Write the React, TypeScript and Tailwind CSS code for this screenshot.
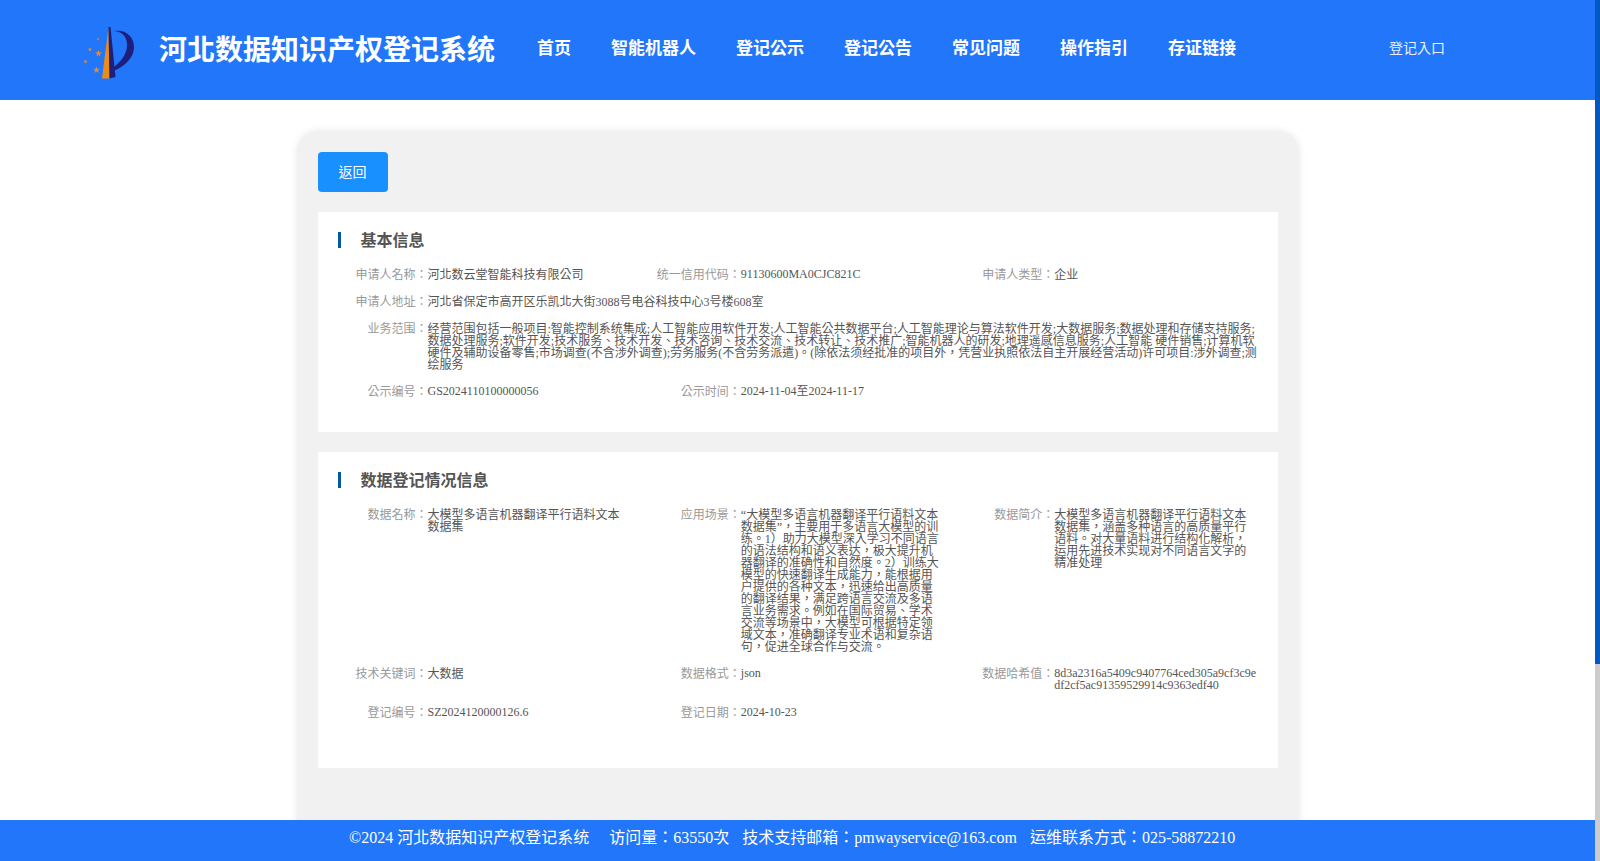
function Star({ cx, cy, r }: { cx: number; cy: number; r: number }) {
  const points = Array.from({ length: 10 }, (_, i) => {
    const radius = i % 2 === 0 ? r : r * 0.42;
    const angle = (Math.PI / 5) * i - Math.PI / 2;
    return `${(cx + radius * Math.cos(angle)).toFixed(2)},${(cy + radius * Math.sin(angle)).toFixed(2)}`;
  }).join(' ');
  return <polygon points={points} fill="#e58a2c" />;
}

function Logo() {
  return (
    <svg width="80" height="70" viewBox="0 0 80 70" className="shrink-0">
      <polygon points="38.5,12 32,63.5 39.5,63.5" fill="#ee8a1a" />
      <polygon points="38.5,12 40.5,12 45.5,62 39.5,63.5" fill="#1d1f7a" />
      <path d="M44.5 16 C56 14 64.5 22 64 33 C63.5 44 53 52 44.5 55.5 L44 52 C50 47 57 40 57 30 C57 21 52 17 44.5 16 Z" fill="#1d1f7a" />
      <Star cx={28.5} cy={38.5} r={3.6} />
      <Star cx={26.5} cy={55} r={3.6} />
      <Star cx={20} cy={34.5} r={2.2} />
      <Star cx={15.5} cy={46.5} r={2.2} />
      <Star cx={28} cy={24} r={1.5} />
    </svg>
  );
}

const navItems = ['首页', '智能机器人', '登记公示', '登记公告', '常见问题', '操作指引', '存证链接'];

function Field({ label, value, full, latin }: { label: string; value: string; full?: boolean; latin?: boolean }) {
  return (
    <div className={`flex mb-[15px] text-[12px] leading-[12px] ${full ? 'col-span-3' : ''}`}>
      <div className="w-[100px] shrink-0 pt-px -mb-px text-right text-[#999]">{label}：</div>
      <div className={`text-[#555] break-all ${latin ? '' : 'pt-px -mb-px'} ${full ? 'w-[830px]' : 'w-[203px]'}`}>{value}</div>
    </div>
  );
}

function Section({ title, className, children }: { title: string; className?: string; children: React.ReactNode }) {
  return (
    <section className={`bg-white px-[10px] pt-[20px] ${className ?? ''}`}>
      <div className="flex items-center gap-[20px] pl-[10px] mb-[20px]">
        <span className="w-[3px] h-[16px] bg-[#005a9e]" />
        <h2 className="pt-px -mb-px text-[16px] leading-[16px] font-bold text-[#555]">{title}</h2>
      </div>
      <div className="grid grid-cols-3">{children}</div>
    </section>
  );
}

export default function App() {
  return (
    <div
      className="h-screen flex overflow-hidden bg-white"
      style={{ fontFamily: '"Liberation Serif", "Noto Sans CJK TC", serif' }}
    >
      <div className="flex-1 min-w-0 flex flex-col">
        <header className="h-[100px] shrink-0 bg-[#2176fa] flex items-center pl-[70px] text-white">
          <Logo />
          <div className="ml-[9px] pt-[2px] text-[28px] font-bold whitespace-nowrap">河北数据知识产权登记系统</div>
          <nav className="flex gap-[40px] ml-[42px] pb-[2px]">
            {navItems.map((item) => (
              <a key={item} className="text-[17px] font-bold whitespace-nowrap">
                {item}
              </a>
            ))}
          </nav>
          <a className="ml-[153px] pb-[3px] text-[14px] text-white/90">登记入口</a>
        </header>

        <main className="flex-1 min-h-0 overflow-hidden pt-[32px]">
          <div className="w-[1000px] h-[910px] mx-auto bg-[#f1f1f1] rounded-[20px] shadow-[0_0_8px_rgba(0,0,0,0.12)] p-[20px]">
            <button type="button" className="block w-[70px] h-[40px] rounded-[4px] bg-[#1890ff] text-white text-[14px]">
              返回
            </button>

            <Section title="基本信息" className="mt-[20px] pb-[20px]">
              <Field label="申请人名称" value="河北数云堂智能科技有限公司" />
              <Field latin label="统一信用代码" value="91130600MA0CJC821C" />
              <Field label="申请人类型" value="企业" />
              <Field full label="申请人地址" value="河北省保定市高开区乐凯北大街3088号电谷科技中心3号楼608室" />
              <Field
                full
                label="业务范围"
                value="经营范围包括一般项目:智能控制系统集成;人工智能应用软件开发;人工智能公共数据平台;人工智能理论与算法软件开发;大数据服务;数据处理和存储支持服务;数据处理服务;软件开发;技术服务、技术开发、技术咨询、技术交流、技术转让、技术推广;智能机器人的研发;地理遥感信息服务;人工智能 硬件销售;计算机软硬件及辅助设备零售;市场调查(不含涉外调查);劳务服务(不含劳务派遣)。(除依法须经批准的项目外，凭营业执照依法自主开展经营活动)许可项目:涉外调查;测绘服务"
              />
              <Field latin label="公示编号" value="GS2024110100000056" />
              <Field latin label="公示时间" value="2024-11-04至2024-11-17" />
            </Section>

            <Section title="数据登记情况信息" className="mt-[20px] pb-[35px]">
              <Field label="数据名称" value="大模型多语言机器翻译平行语料文本数据集" />
              <Field
                label="应用场景"
                value="“大模型多语言机器翻译平行语料文本数据集”，主要用于多语言大模型的训练。1）助力大模型深入学习不同语言的语法结构和语义表达，极大提升机器翻译的准确性和自然度。2）训练大模型的快速翻译生成能力，能根据用户提供的各种文本，迅速给出高质量的翻译结果，满足跨语言交流及多语言业务需求。例如在国际贸易、学术交流等场景中，大模型可根据特定领域文本，准确翻译专业术语和复杂语句，促进全球合作与交流。"
              />
              <Field
                label="数据简介"
                value="大模型多语言机器翻译平行语料文本数据集，涵盖多种语言的高质量平行语料。对大量语料进行结构化解析，运用先进技术实现对不同语言文字的精准处理"
              />
              <Field label="技术关键词" value="大数据" />
              <Field latin label="数据格式" value="json" />
              <Field latin label="数据哈希值" value="8d3a2316a5409c9407764ced305a9cf3c9edf2cf5ac91359529914c9363edf40" />
              <Field latin label="登记编号" value="SZ2024120000126.6" />
              <Field latin label="登记日期" value="2024-10-23" />
            </Section>
          </div>
        </main>

        <footer className="h-[41px] shrink-0 bg-[#2176fa] flex pl-[349px] pt-[8px] text-[16px] leading-[20px] text-white whitespace-pre">
          <span>©2024 河北数据知识产权登记系统</span>
          <span className="ml-[20px]">访问量：63550次</span>
          <span className="ml-[13px]">技术支持邮箱：pmwayservice@163.com</span>
          <span className="ml-[13px]">运维联系方式：025-58872210</span>
        </footer>
      </div>

      <div className="w-[5px] shrink-0 bg-[#ccc]">
        <div className="h-[664px] bg-[#0058c0]" />
      </div>
    </div>
  );
}
